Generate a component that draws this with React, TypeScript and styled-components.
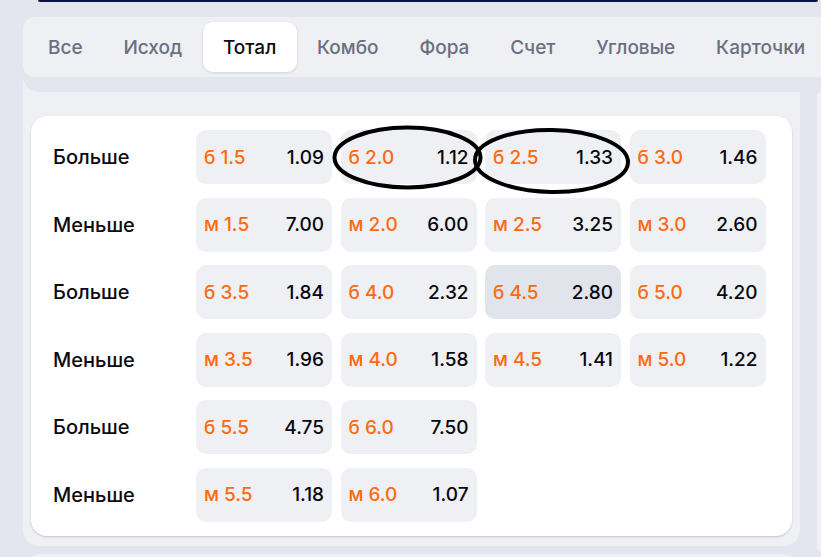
import React from "react";
import styled, { createGlobalStyle } from "styled-components";

const GlobalStyle = createGlobalStyle`
  html, body {
    margin: 0;
    padding: 0;
    background: #e3e6ee;
    overflow: hidden;
  }
  * { box-sizing: border-box; }
  body {
    font-family: Inter, "Noto Sans", "Liberation Sans", sans-serif;
  }
`;

const Page = styled.div`
  width: 821px;
  height: 557px;
  overflow: hidden;
  padding-left: 23px;
`;

const TopLine = styled.div`
  margin-left: 15px;
  width: 780px;
  height: 2px;
  background: #0c1242;
  border-radius: 0 0 2px 2px;
`;

const Layout = styled.div`
  display: flex;
  align-items: flex-start;
  gap: 17px;
  margin-top: 15px;
`;

const MainCol = styled.div`
  width: 777px;
  flex-shrink: 0;
  display: flex;
  flex-direction: column;
  gap: 8px;
`;

const MainPanel = styled.div`
  background: #eef0f4;
  border-radius: 16px;
  padding: 0 8px 10px;
`;

const Header = styled.div`
  background: #e3e6ee;
  margin: 0 -80px 24px -8px;
  padding-bottom: 15px;
  border-bottom-left-radius: 16px;
`;

const TabBar = styled.div`
  display: flex;
  align-items: center;
  height: 60px;
  padding: 5px 5px 5px 4.6px;
  background: #eef0f4;
  border-radius: 12px;
`;

const Tab = styled.div<{ $active?: boolean }>`
  height: 50px;
  display: flex;
  align-items: center;
  padding: 0 20.4px;
  font-size: 19px;
  font-weight: 500;
  white-space: nowrap;
  color: ${(p) => (p.$active ? "#0b0b12" : "#6b6f80")};
  background: ${(p) => (p.$active ? "#ffffff" : "transparent")};
  border-radius: 10px;
  box-shadow: ${(p) =>
    p.$active ? "0 1px 3px rgba(20, 30, 60, 0.14)" : "none"};
`;

const Card = styled.div`
  position: relative;
  background: #ffffff;
  border-radius: 16px;
  padding: 14px 27px 14px 22px;
  box-shadow: 0 1px 2px rgba(20, 30, 60, 0.2);
  display: flex;
  flex-direction: column;
  gap: 13.5px;
`;

const Row = styled.div`
  display: grid;
  grid-template-columns: 134.5px repeat(4, 136px);
  height: 54px;
  column-gap: 8.5px;
`;

const Label = styled.div`
  align-self: center;
  font-size: 20px;
  font-weight: 500;
  color: #0b0b12;
`;

const Cell = styled.div<{ $hover?: boolean }>`
  display: flex;
  align-items: center;
  justify-content: space-between;
  padding: 0 8px;
  border-radius: 10px;
  background: ${(p) => (p.$hover ? "#e1e4eb" : "#eef0f4")};
  font-size: 19px;
  font-weight: 500;
`;

const Line = styled.span`
  color: #ff6a10;
`;

const Odd = styled.span`
  color: #07070d;
`;

const Annotations = styled.svg`
  position: absolute;
  left: 0;
  top: 0;
  width: 100%;
  height: 100%;
  pointer-events: none;
  overflow: visible;
`;

const BottomPanel = styled.div`
  height: 40px;
  background: #eef0f4;
  border-radius: 16px;
`;

const SidePanel = styled.div`
  flex: 1;
  margin-top: 75px;
  height: 460px;
  background: #eef0f4;
  border-radius: 16px 0 0 16px;
`;

type Bet = { line: string; odd: string; hover?: boolean };
type RowData = { label: string; bets: Bet[] };

const tabs = ["Все", "Исход", "Тотал", "Комбо", "Фора", "Счет", "Угловые", "Карточки"];

const rows: RowData[] = [
  {
    label: "Больше",
    bets: [
      { line: "б 1.5", odd: "1.09" },
      { line: "б 2.0", odd: "1.12" },
      { line: "б 2.5", odd: "1.33" },
      { line: "б 3.0", odd: "1.46" },
    ],
  },
  {
    label: "Меньше",
    bets: [
      { line: "м 1.5", odd: "7.00" },
      { line: "м 2.0", odd: "6.00" },
      { line: "м 2.5", odd: "3.25" },
      { line: "м 3.0", odd: "2.60" },
    ],
  },
  {
    label: "Больше",
    bets: [
      { line: "б 3.5", odd: "1.84" },
      { line: "б 4.0", odd: "2.32" },
      { line: "б 4.5", odd: "2.80", hover: true },
      { line: "б 5.0", odd: "4.20" },
    ],
  },
  {
    label: "Меньше",
    bets: [
      { line: "м 3.5", odd: "1.96" },
      { line: "м 4.0", odd: "1.58" },
      { line: "м 4.5", odd: "1.41" },
      { line: "м 5.0", odd: "1.22" },
    ],
  },
  {
    label: "Больше",
    bets: [
      { line: "б 5.5", odd: "4.75" },
      { line: "б 6.0", odd: "7.50" },
    ],
  },
  {
    label: "Меньше",
    bets: [
      { line: "м 5.5", odd: "1.18" },
      { line: "м 6.0", odd: "1.07" },
    ],
  },
];

export default function App() {
  return (
    <>
      <GlobalStyle />
      <Page>
        <TopLine />
        <Layout>
          <MainCol>
            <MainPanel>
              <Header>
                <TabBar>
                  {tabs.map((t) => (
                    <Tab key={t} $active={t === "Тотал"}>
                      {t}
                    </Tab>
                  ))}
                </TabBar>
              </Header>
              <Card>
                {rows.map((r, i) => (
                  <Row key={i}>
                    <Label>{r.label}</Label>
                    {r.bets.map((b) => (
                      <Cell key={b.line} $hover={b.hover}>
                        <Line>{b.line}</Line>
                        <Odd>{b.odd}</Odd>
                      </Cell>
                    ))}
                  </Row>
                ))}
                <Annotations>
                  <ellipse
                    cx="376.5"
                    cy="41.5"
                    rx="73"
                    ry="30"
                    fill="none"
                    stroke="#000"
                    strokeWidth="4"
                  />
                  <ellipse
                    cx="520.5"
                    cy="45"
                    rx="76.5"
                    ry="31"
                    fill="none"
                    stroke="#000"
                    strokeWidth="4"
                    transform="rotate(1 520.5 45)"
                  />
                </Annotations>
              </Card>
            </MainPanel>
            <BottomPanel />
          </MainCol>
          <SidePanel />
        </Layout>
      </Page>
    </>
  );
}
